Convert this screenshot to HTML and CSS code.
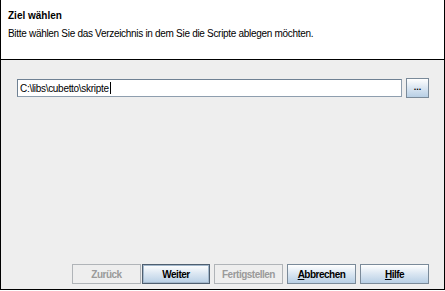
FILE: index.html
```html
<!DOCTYPE html>
<html>
<head>
<meta charset="utf-8">
<link rel="stylesheet" href="styles.css">
</head>
<body>
<div class="frame">
  <div class="header">
    <div class="title">Ziel wählen</div>
    <div class="subtitle">Bitte wählen Sie das Verzeichnis in dem Sie die Scripte ablegen möchten.</div>
  </div>
  <div class="content">
    <div class="field-row">
      <div class="field"><span class="value">C:\libs\cubetto\skripte</span><span class="caret"></span></div>
      <div class="btn small">...</div>
    </div>
    <div class="spacer"></div>
    <div class="buttons">
      <div class="btn disabled">Zurück</div>
      <div class="btn default">Weiter</div>
      <div class="btn disabled gap">Fertigstellen</div>
      <div class="btn gap"><u>A</u>bbrechen</div>
      <div class="btn gap"><u>H</u>ilfe</div>
    </div>
  </div>
</div>
</body>
</html>
```
FILE: styles.css
```css
html, body {
  margin: 0;
  padding: 0;
  background: #ffffff;
}
.frame {
  width: 445px;
  height: 290px;
  box-sizing: border-box;
  border-left: 1px solid #000;
  border-right: 1px solid #000;
  border-bottom: 1px solid #000;
  display: flex;
  flex-direction: column;
  font-family: "Liberation Sans", Arial, sans-serif;
  font-size: 10px;
  color: #000;
}
.header {
  height: 60px;
  box-sizing: border-box;
  background: #fff;
  border-bottom: 1px solid #000;
  padding: 9px 0 0 7px;
}
.title {
  font-weight: bold;
  font-size: 10px;
  line-height: 13px;
}
.subtitle {
  margin-top: 5px;
  line-height: 13px;
  letter-spacing: -0.3px;
}
.content {
  flex: 1;
  background: #eeeeee;
  display: flex;
  flex-direction: column;
  padding: 18px 15px 5px 16px;
}
.field-row {
  display: flex;
  align-items: center;
  gap: 4px;
}
.field {
  flex: 1;
  height: 18px;
  box-sizing: border-box;
  background: #fff;
  border: 1px solid #8e9eae;
  border-top-color: #6f8193;
  border-left-color: #6f8193;
  display: flex;
  align-items: center;
  padding-left: 2px;
  letter-spacing: -0.3px;
}
.caret {
  display: inline-block;
  width: 1px;
  height: 12px;
  background: #000;
  margin-left: 1px;
}
.spacer {
  flex: 1;
}
.buttons {
  display: flex;
  justify-content: flex-end;
}
.btn {
  width: 69px;
  height: 20px;
  box-sizing: border-box;
  border: 1px solid #7a8a99;
  background: linear-gradient(#ffffff, #dde8f3 45%, #b8cfe5);
  display: flex;
  align-items: center;
  justify-content: center;
  font-weight: bold;
  font-size: 10px;
  letter-spacing: -0.5px;
  color: #000;
}
.btn.small {
  width: 23px;
  height: 20px;
  font-size: 9px;
  letter-spacing: 0;
  padding-bottom: 2px;
}
.btn.default {
  border: 1px solid #4f5f70;
  box-shadow: inset 0 0 0 1px #a3b8cc;
  width: 68px;
  margin-left: 1px;
}
.btn.disabled {
  background: #eeeeee;
  border-color: #b0b4b8;
  color: #9a9a9a;
}
.btn.gap {
  margin-left: 4px;
}
.btn u {
  text-decoration: underline;
}
```
